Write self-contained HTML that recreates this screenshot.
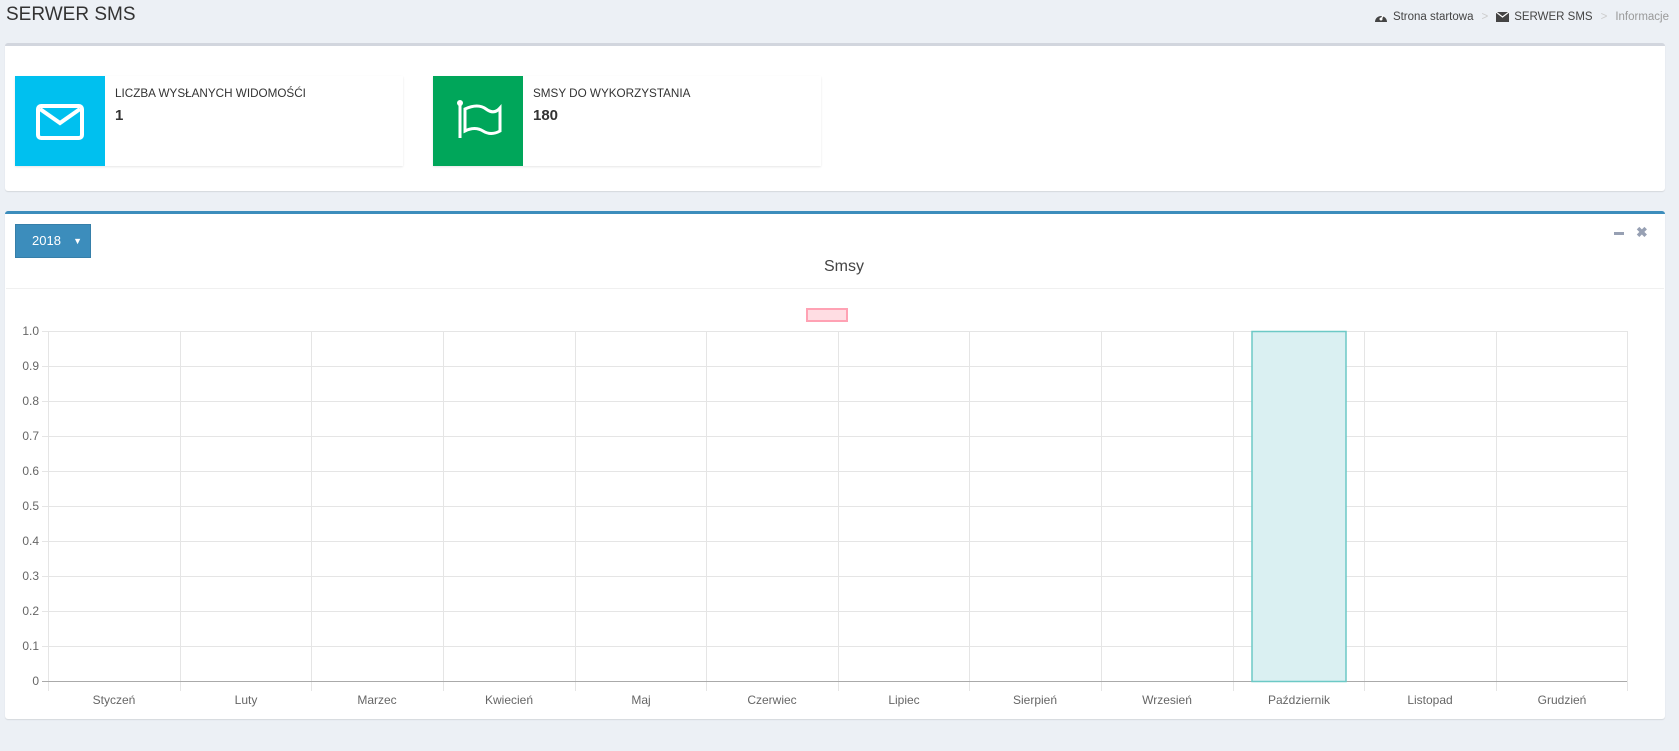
<!DOCTYPE html>
<html><head><meta charset="utf-8"><style>
*{box-sizing:border-box;margin:0;padding:0}
body{width:1679px;height:751px;background:#ecf0f5;font-family:"Liberation Sans",sans-serif;position:relative;overflow:hidden;color:#333}
.abs{position:absolute}
h1{position:absolute;left:6px;top:4px;font-size:19px;font-weight:normal;color:#333}
.bc{position:absolute;right:10px;top:11px;font-size:11.5px;color:#444;display:flex;align-items:center;gap:5px}
.bc .sep{color:#ccc;margin:0 3px}
.box{position:absolute;background:#fff;border-radius:3px;box-shadow:0 1px 1px rgba(0,0,0,.1)}
.ib{position:absolute;top:76px;height:90px;width:388px;background:#fff;box-shadow:0 1px 2px rgba(0,0,0,.1)}
.ib .ic{position:absolute;left:0;top:0;width:90px;height:90px}
.ib .t{position:absolute;left:100px;top:11px;font-size:11.7px;color:#333}
.ib .n{position:absolute;left:100px;top:31px;font-size:15px;font-weight:bold;color:#333}
</style></head><body>
<h1>SERWER SMS</h1>
<div class="bc">
<svg width="14" height="12" viewBox="0 0 14 12"><path d="M1 11 A6 6 0 1 1 13 11 Z" fill="#444"/><circle cx="7" cy="8" r="1.5" fill="#fff"/><path d="M7 8 L9.5 4" stroke="#fff" stroke-width="1.3"/></svg>
<span>Strona startowa</span><span class="sep">&gt;</span>
<svg width="13" height="10" viewBox="0 0 13 10"><rect width="13" height="10" fill="#444"/><path d="M0 0 L6.5 5 L13 0" stroke="#fff" stroke-width="1.2" fill="none"/></svg>
<span>SERWER SMS</span><span class="sep">&gt;</span><span style="color:#999">Informacje</span>
</div>

<div class="box" style="left:5px;top:43px;width:1660px;height:148px;border-top:3px solid #d2d6de"></div>
<div class="ib" style="left:15px"><div class="ic" style="background:#00c0ef">
<svg width="90" height="90"><rect x="23" y="30" width="44" height="32" rx="3" fill="none" stroke="#fff" stroke-width="4"/><path d="M25 33 L45 47 L65 33" fill="none" stroke="#fff" stroke-width="4"/></svg></div>
<div class="t">LICZBA WYSŁANYCH WIDOMOŚĆI</div><div class="n">1</div></div>
<div class="ib" style="left:433px"><div class="ic" style="background:#00a65a">
<svg width="90" height="90"><circle cx="27" cy="27" r="3" fill="#fff"/><path d="M27 28 V62" stroke="#fff" stroke-width="3"/><path d="M32 33 Q45 27 53 33 T67 32 V55 Q58 60 50 55 T32 55 Z" fill="none" stroke="#fff" stroke-width="3"/></svg></div>
<div class="t">SMSY DO WYKORZYSTANIA</div><div class="n">180</div></div>

<div class="box" style="left:5px;top:211px;width:1660px;height:508px;border-top:3px solid #3c8dbc"></div>
<div class="abs" style="left:15px;top:224px;width:76px;height:34px;background:#3c8dbc;border:1px solid #367fa9;color:#fff;font-size:13px;line-height:32px;padding-left:16px">2018<span style="position:absolute;right:8px;font-size:9px">▼</span></div>
<div class="abs" style="left:1614px;top:232px;width:10px;height:3px;background:#97a0b3"></div>
<div class="abs" style="left:1636px;top:224px;font-size:14px;color:#97a0b3;font-weight:bold">✖</div>
<div class="abs" style="left:0;top:258px;width:1679px;text-align:center;font-size:16px;color:#444;padding-left:9px">Smsy</div>
<div class="abs" style="left:6px;top:288px;width:1658px;height:1px;background:#f0f0f0"></div>
<svg class="abs" style="left:0;top:0" width="1679" height="751">
<rect x="807" y="309" width="40" height="12" fill="#ffdde3" stroke="#ffa2b4" stroke-width="2"/>
<g stroke="#e5e5e5" stroke-width="1">
<line x1="42" y1="331.5" x2="1627" y2="331.5"/><line x1="42" y1="366.5" x2="1627" y2="366.5"/><line x1="42" y1="401.5" x2="1627" y2="401.5"/><line x1="42" y1="436.5" x2="1627" y2="436.5"/><line x1="42" y1="471.5" x2="1627" y2="471.5"/><line x1="42" y1="506.5" x2="1627" y2="506.5"/><line x1="42" y1="541.5" x2="1627" y2="541.5"/><line x1="42" y1="576.5" x2="1627" y2="576.5"/><line x1="42" y1="611.5" x2="1627" y2="611.5"/><line x1="42" y1="646.5" x2="1627" y2="646.5"/>
<line x1="48.5" y1="331" x2="48.5" y2="691"/><line x1="180.5" y1="331" x2="180.5" y2="691"/><line x1="311.5" y1="331" x2="311.5" y2="691"/><line x1="443.5" y1="331" x2="443.5" y2="691"/><line x1="575.5" y1="331" x2="575.5" y2="691"/><line x1="706.5" y1="331" x2="706.5" y2="691"/><line x1="838.5" y1="331" x2="838.5" y2="691"/><line x1="969.5" y1="331" x2="969.5" y2="691"/><line x1="1101.5" y1="331" x2="1101.5" y2="691"/><line x1="1233.5" y1="331" x2="1233.5" y2="691"/><line x1="1364.5" y1="331" x2="1364.5" y2="691"/><line x1="1496.5" y1="331" x2="1496.5" y2="691"/><line x1="1627.5" y1="331" x2="1627.5" y2="691"/>
</g>
<line x1="42" y1="681.5" x2="1627" y2="681.5" stroke="#aaa"/>
<rect x="1252" y="331.5" width="94" height="350" fill="#daf0f2" stroke="#6cc9c6" stroke-width="1.5"/>
<g font-family="Liberation Sans,sans-serif" font-size="12" fill="#666" text-anchor="end">
<text x="39" y="335">1.0</text><text x="39" y="370">0.9</text><text x="39" y="405">0.8</text><text x="39" y="440">0.7</text><text x="39" y="475">0.6</text><text x="39" y="510">0.5</text><text x="39" y="545">0.4</text><text x="39" y="580">0.3</text><text x="39" y="615">0.2</text><text x="39" y="650">0.1</text><text x="39" y="685">0</text>
</g>
<g font-family="Liberation Sans,sans-serif" font-size="12" fill="#666" text-anchor="middle">
<text x="114" y="704">Styczeń</text><text x="246" y="704">Luty</text><text x="377" y="704">Marzec</text><text x="509" y="704">Kwiecień</text><text x="641" y="704">Maj</text><text x="772" y="704">Czerwiec</text><text x="904" y="704">Lipiec</text><text x="1035" y="704">Sierpień</text><text x="1167" y="704">Wrzesień</text><text x="1299" y="704">Październik</text><text x="1430" y="704">Listopad</text><text x="1562" y="704">Grudzień</text>
</g>
</svg>
</body></html>
